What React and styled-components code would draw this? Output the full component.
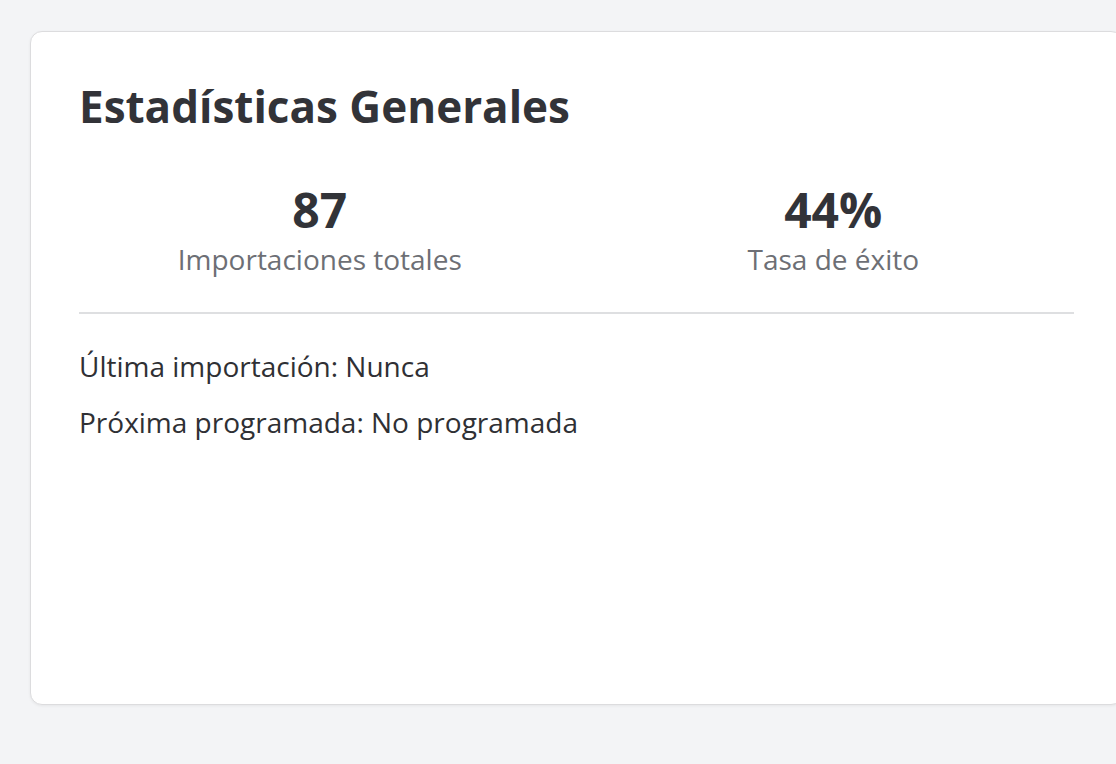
import React from 'react';
import styled, { createGlobalStyle } from 'styled-components';

const GlobalStyle = createGlobalStyle`
    html,
    body {
        margin: 0;
        padding: 0;
        background: #f3f4f6;
        overflow: hidden;
    }

    body {
        font-family: 'Open Sans', 'Noto Sans', sans-serif;
        color: #333438;
    }
`;

const StyledPage = styled.main`
    padding: 31px 0 0 30px;
    width: 1200px;
    height: 764px;
    box-sizing: border-box;
`;

const StyledCard = styled.section`
    box-sizing: border-box;
    width: 1093px;
    height: 674px;
    padding: 48px;
    background: #ffffff;
    border: 1px solid #dcdcde;
    border-radius: 12px;
    box-shadow: 0 1px 3px rgba(0, 0, 0, 0.06);
`;

const StyledTitle = styled.h2`
    margin: 0 0 48px;
    font-size: 44px;
    font-weight: 700;
    line-height: 1.2;
    color: #323338;
`;

const StyledStats = styled.div`
    display: grid;
    grid-template-columns: 1fr 1fr;
    gap: 32px;
    padding-bottom: 32px;
    border-bottom: 2px solid #dedfe1;
`;

const StyledStat = styled.div`
    text-align: center;
`;

const StyledValue = styled.div`
    font-size: 48px;
    font-weight: 700;
    line-height: 1.2;
    color: #323338;
`;

const StyledLabel = styled.div`
    font-size: 28px;
    line-height: 1.5;
    color: #6d6f75;
`;

const StyledInfo = styled.div`
    display: flex;
    flex-direction: column;
    gap: 14px;
    padding-top: 31px;
`;

const StyledLine = styled.p`
    margin: 0;
    font-size: 28px;
    line-height: 1.5;
    color: #2f3034;
`;

const stats = [
    { value: '87', label: 'Importaciones totales' },
    { value: '44%', label: 'Tasa de éxito' },
];

const App = () => (
    <>
        <GlobalStyle />
        <StyledPage>
            <StyledCard>
                <StyledTitle>Estadísticas Generales</StyledTitle>

                <StyledStats>
                    {stats.map(stat => (
                        <StyledStat key={stat.label}>
                            <StyledValue>{stat.value}</StyledValue>
                            <StyledLabel>{stat.label}</StyledLabel>
                        </StyledStat>
                    ))}
                </StyledStats>

                <StyledInfo>
                    <StyledLine>Última importación: Nunca</StyledLine>
                    <StyledLine>Próxima programada: No programada</StyledLine>
                </StyledInfo>
            </StyledCard>
        </StyledPage>
    </>
);

export default App;
